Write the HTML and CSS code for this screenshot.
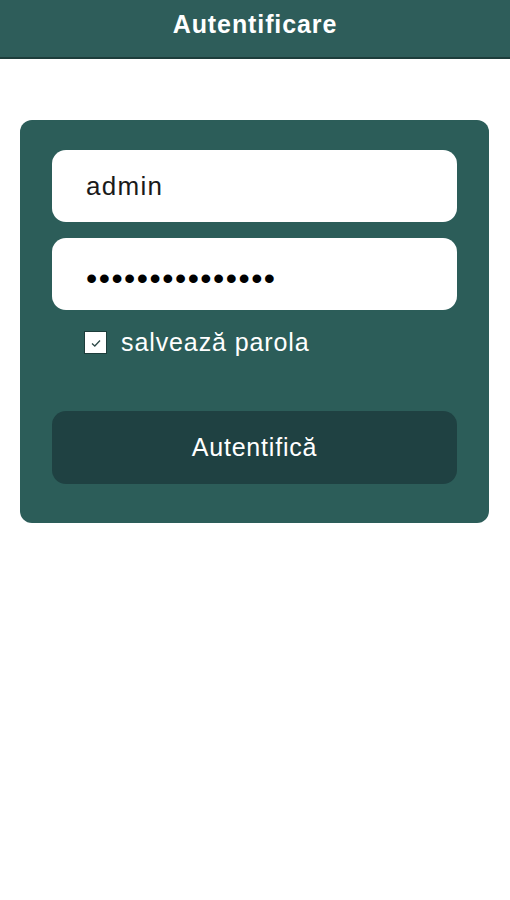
FILE: index.html
```html
<!DOCTYPE html>
<html lang="ro">
<head>
    <meta charset="UTF-8">
    <meta name="viewport" content="width=device-width, initial-scale=1.0">
    <title>Autentificare</title>
    <link rel="stylesheet" href="styles.css">
</head>
<body>

<header class="topbar">
    <h1>Autentificare</h1>
</header>

<div class="container">
    <form class="login-card" id="frmLogin">
        <input class="field" type="text" name="user" value="admin">
        <input class="field field-pass" type="password" name="pass" value="parolaadmin1234">

        <label class="remember">
            <span class="check-box">
                <svg width="12" height="10" viewBox="0 0 12 10">
                    <path d="M2 5.5 L4.8 8 L10 2.5" fill="none" stroke="#2f4a48" stroke-width="1.3"/>
                </svg>
            </span>
            salvează parola
        </label>

        <button type="submit" class="btn-login">Autentifică</button>
    </form>
</div>

</body>
</html>
```

FILE: styles.css
```css
body {
    font-family: "Liberation Sans", Arial, sans-serif;
    background-color: #ffffff;
    margin: 0;
}

.topbar {
    background-color: #2e5d5a;
    height: 57px;
    border-bottom: 2px solid #1d3d3b;
    display: flex;
    justify-content: center;
}

.topbar h1 {
    margin: 0;
    padding-top: 10px;
    color: #ffffff;
    font-size: 25px;
    font-weight: bold;
    letter-spacing: 0.9px;
    line-height: 29px;
}

.container {
    padding: 61px 21px 0 20px;
}

.login-card {
    background: #2c5d59;
    border-radius: 12px;
    padding: 30px 32px 39px 32px;
    display: flex;
    flex-direction: column;
}

.field {
    height: 72px;
    border: none;
    border-radius: 14px;
    background: #ffffff;
    padding: 0 0 0 34px;
    font-family: "Liberation Sans", Arial, sans-serif;
    font-size: 26px;
    letter-spacing: 1.3px;
    color: #1a1a1a;
    outline: none;
    box-sizing: border-box;
    width: 100%;
}

.field-pass {
    margin-top: 16px;
    padding-top: 8px;
    font-size: 32px;
    letter-spacing: 1.5px;
    color: #000000;
}

.remember {
    display: flex;
    align-items: center;
    gap: 14px;
    margin: 20px 0 0 32px;
    height: 25px;
    color: #ffffff;
    font-size: 25px;
    letter-spacing: 0.9px;
}

.check-box {
    width: 21px;
    height: 21px;
    background: #ffffff;
    border: 1px solid #1d3d3b;
    display: flex;
    justify-content: center;
    align-items: center;
}

.btn-login {
    margin-top: 56px;
    height: 73px;
    border: none;
    border-radius: 14px;
    background-color: #1f4142;
    color: #ffffff;
    font-family: "Liberation Sans", Arial, sans-serif;
    font-size: 25px;
    letter-spacing: 0.8px;
    cursor: pointer;
}
```
